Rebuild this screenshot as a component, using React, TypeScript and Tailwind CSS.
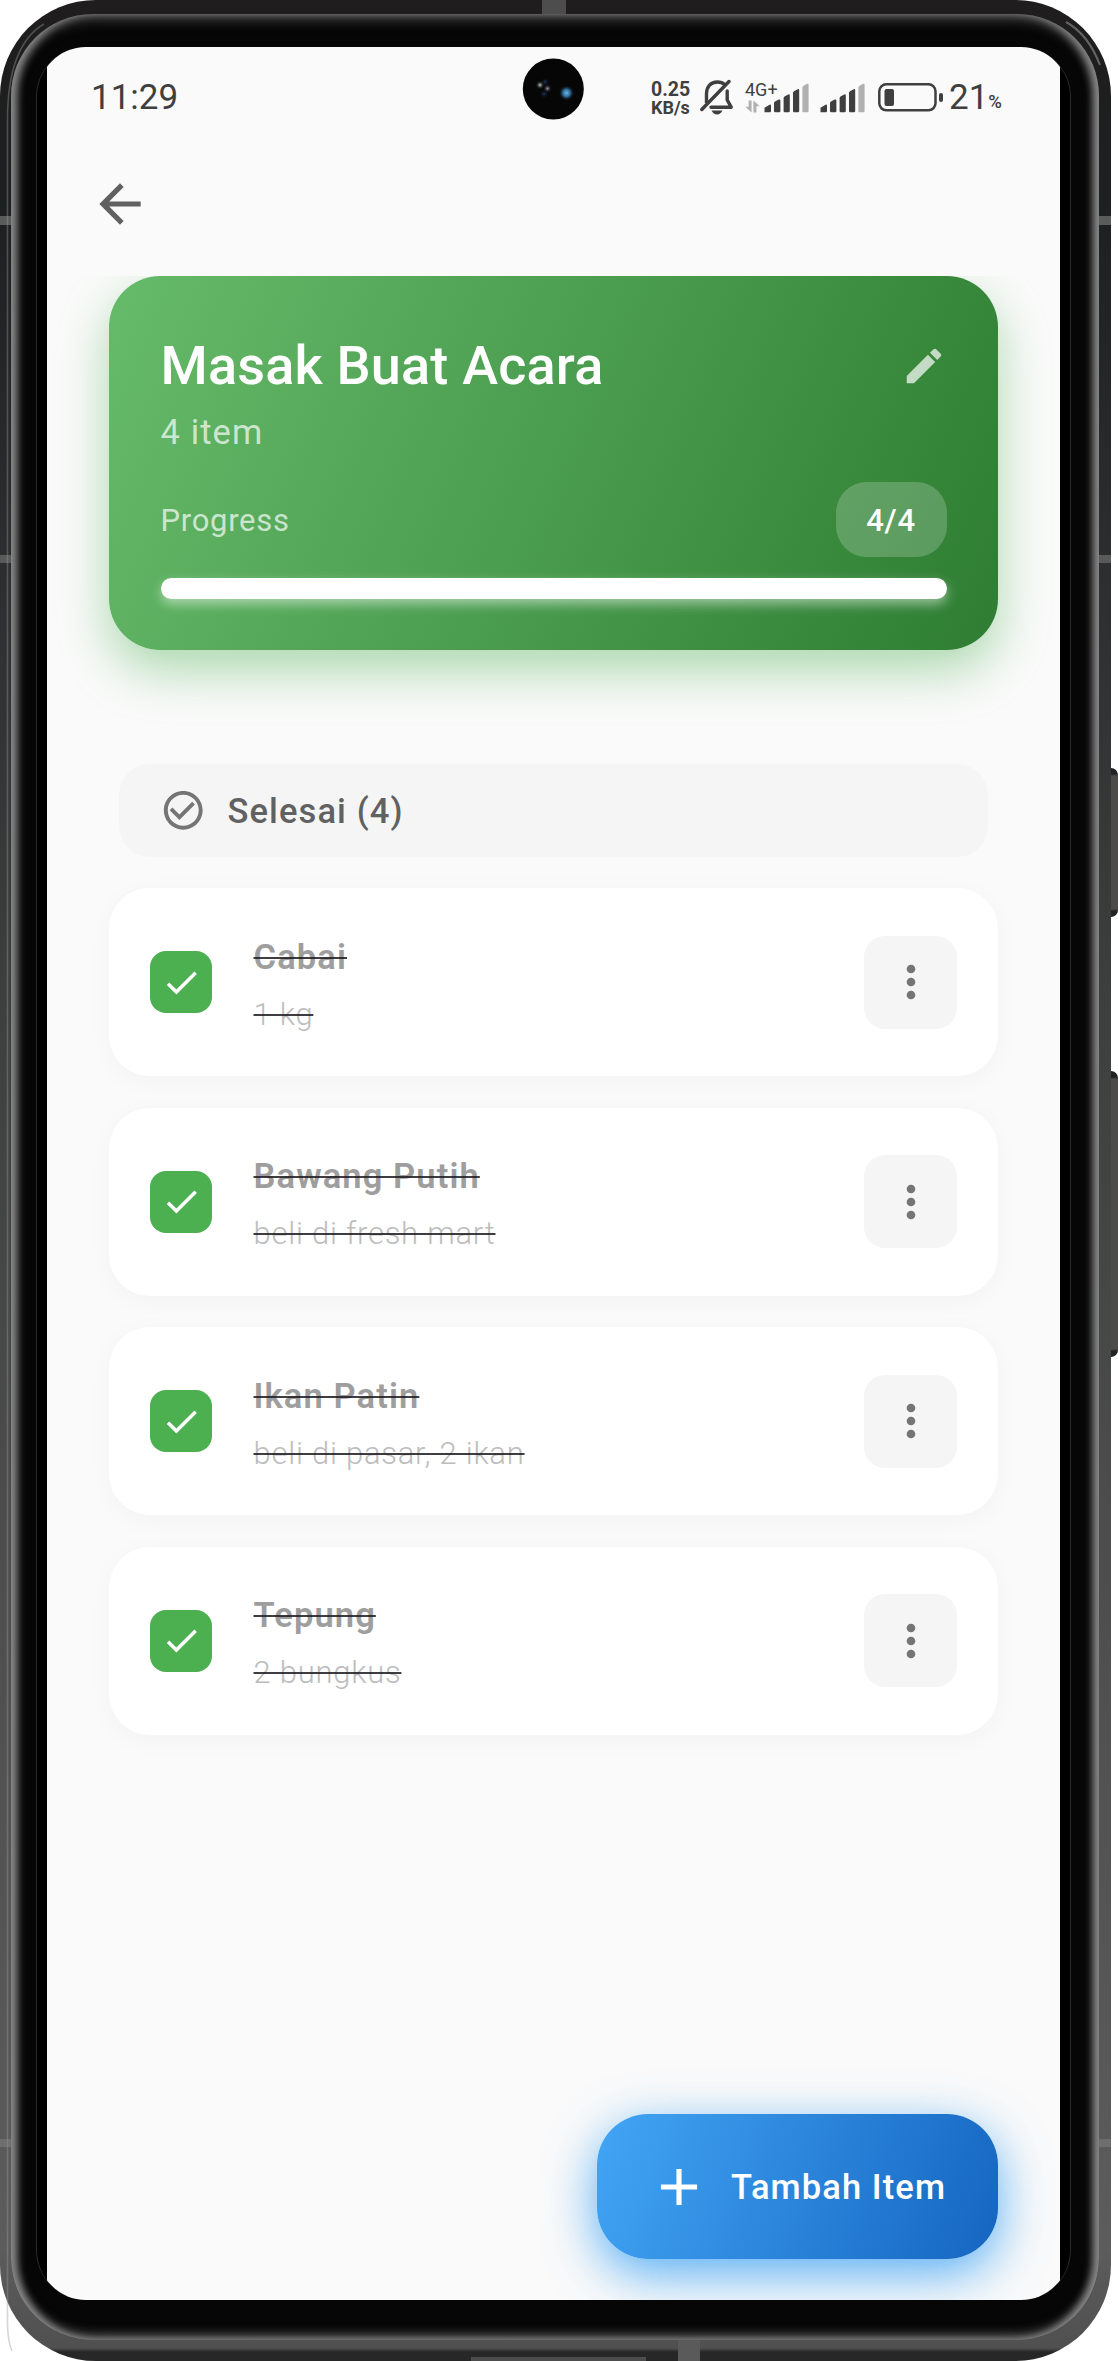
import { MdArrowBack, MdEdit, MdCheckCircleOutline, MdCheck, MdMoreVert, MdAdd } from "react-icons/md";

const items = [
  { name: "Cabai", note: "1 kg" },
  { name: "Bawang Putih", note: "beli di fresh mart" },
  { name: "Ikan Patin", note: "beli di pasar, 2 ikan" },
  { name: "Tepung", note: "2 bungkus" },
];

function SignalBars() {
  return (
    <svg className="h-[30px] w-[46px]" viewBox="0 0 46 30" fill="#3f3f3f">
      <path d="M0.5 29.2V25.5Q0.5 24.6 1.3 24.2L5.6 21.7Q7 21.2 7 22.8V28Q7 29.2 5.8 29.2Z" />
      <path d="M10 28V20Q10 19 11 18.5L14.8 16.5Q16.4 16 16.4 17.6V28Q16.4 29.2 15.2 29.2H11.2Q10 29.2 10 28Z" />
      <path d="M19.6 28V15Q19.6 14 20.5 13.5L24.2 11.4Q25.8 10.9 25.8 12.5V28Q25.8 29.2 24.6 29.2H20.8Q19.6 29.2 19.6 28Z" />
      <path d="M29 28V9.8Q29 8.8 30 8.3L33.6 6.2Q35.2 5.7 35.2 7.3V28Q35.2 29.2 34 29.2H30.2Q29 29.2 29 28Z" />
      <path fill="#b0b0b0" d="M38.4 28V4.4Q38.4 3.4 39.4 2.9L43 0.8Q44.6 0.3 44.6 1.9V28Q44.6 29.2 43.4 29.2H39.6Q38.4 29.2 38.4 28Z" />
    </svg>
  );
}

function StatusBar() {
  return (
    <div className="flex h-[101px] items-center pl-[44px] text-[#3f3f3f]">
      <span className="w-[560px] text-[35px] leading-[40px] font-[450]">11:29</span>
      <div className="w-[49px] pt-[2px] text-[19.5px] leading-[18px] font-bold">
        <div>0.25</div>
        <div className="text-[18px]">KB/s</div>
      </div>
      <svg className="h-[37px] w-[34px]" viewBox="0 0 34 37" fill="none" stroke="#3f3f3f" strokeWidth="3.4">
        <path d="M6.5 24V15C6.5 7.5 11 3 17.3 3C20.5 3 23 4 24.8 5.6" />
        <path d="M27.2 12V21L31.2 28.2H11" strokeLinejoin="round" strokeLinecap="round" />
        <path d="M1.8 30.5L29 2.5" strokeLinecap="round" />
        <path d="M11.5 31.6H22.5Q20.5 35.6 17 35.6Q13.5 35.6 11.5 31.6Z" fill="#3f3f3f" stroke="none" />
      </svg>
      <div className="-mt-[2px] ml-[11px] flex w-[19px] flex-col items-start">
        <span className="text-[18px] leading-[18px] font-[450]">4G+</span>
        <svg className="mt-[1px] h-[13px] w-[15px]" viewBox="0 0 15 13" fill="#b0b0b0">
          <path d="M3.6 0.5H6.6V12.5L0.3 6.8H3.6Z" />
          <path d="M8.4 12.5V0.5L14.7 6.2H11.4V12.5Z" />
        </svg>
      </div>
      <SignalBars />
      <div className="ml-[10px]">
        <SignalBars />
      </div>
      <svg className="ml-[12px] h-[29px] w-[66px]" viewBox="0 0 66 29" fill="none">
        <rect x="1.3" y="1.3" width="56.2" height="26" rx="7" stroke="#3f3f3f" strokeWidth="2.5" />
        <rect x="6.5" y="6" width="9.5" height="17" rx="2" fill="#3f3f3f" />
        <rect x="61" y="10" width="4" height="9" rx="2" fill="#3f3f3f" />
      </svg>
      <span className="ml-[5px] text-[35px] leading-[40px] font-[450]">21</span>
      <span className="pt-[9px] text-[18.5px] leading-[20px] font-medium">%</span>
    </div>
  );
}

function SummaryCard() {
  return (
    <section className="flex h-[374px] flex-col rounded-[51px] bg-[linear-gradient(112.8deg,#66bb6a,#2e7d32)] px-[51.5px] pt-[60px] text-white shadow-[0_20px_50px_rgba(76,175,80,0.45)]">
      <div className="flex h-[60px] items-center justify-between">
        <h1 className="text-[54px] leading-[60px] font-medium tracking-[0.2px]">Masak Buat Acara</h1>
        <MdEdit className="size-[46px] text-white/70" />
      </div>
      <p className="mt-[16px] text-[34.5px] leading-[40px] tracking-[1.1px] text-white/70">4 item</p>
      <div className="mt-[30px] flex h-[75px] items-center justify-between">
        <span className="pt-[3px] text-[31px] leading-[36px] tracking-[0.7px] text-white/70">Progress</span>
        <span className="flex h-[75px] w-[111px] items-center justify-center rounded-[31px] bg-white/20 pt-[3px] text-[31px] font-medium tracking-[0.7px]">4/4</span>
      </div>
      <div className="mt-[21px] h-[21px] rounded-full bg-white shadow-[0_5px_12px_rgba(255,255,255,0.5)]" />
    </section>
  );
}

function ItemCard({ name, note }: { name: string; note: string }) {
  return (
    <li className="flex h-[188px] items-center rounded-[41px] bg-white pr-[41px] pl-[41px] shadow-[0_5px_26px_rgba(0,0,0,0.03)]">
      <span className="flex size-[62px] items-center justify-center rounded-[16px] bg-[#4caf50]">
        <MdCheck className="size-[41px] text-white" />
      </span>
      <div className="ml-[41.5px] flex flex-1 flex-col items-start gap-[18px] pt-[7px]">
        <span className="text-[34.5px] leading-[40px] font-semibold tracking-[1.1px] text-[#9e9e9e] line-through decoration-[#1d1b20]/85 decoration-2">{name}</span>
        <span className="text-[31px] leading-[40px] font-light tracking-[0.75px] text-[#bdbdbd] line-through decoration-[#1d1b20]/85 decoration-2">{note}</span>
      </div>
      <button className="flex size-[93px] items-center justify-center rounded-[21px] bg-[#f5f5f5]">
        <MdMoreVert className="size-[52px] text-[#757575]" />
      </button>
    </li>
  );
}

export default function App() {
  return (
    <div className="relative h-[2361px] w-[1118px] overflow-hidden bg-white font-[Roboto,sans-serif]">
      <div className="absolute top-[768px] right-0 h-[149px] w-[12px] rounded-r-[7px] bg-[linear-gradient(to_bottom,#222_0,#222_6px,#4c4b4a_8px,#4c4b4a_141px,#222_143px)]" />
      <div className="absolute top-[1071px] right-0 h-[286px] w-[12px] rounded-r-[7px] bg-[linear-gradient(to_bottom,#222_0,#222_6px,#4c4b4a_8px,#4c4b4a_278px,#222_280px)]" />
      <div className="relative h-[2361px] w-[1111px] overflow-hidden rounded-[96px] bg-[linear-gradient(to_bottom,#1f1d1d_0,#1d2021_200px,#3d3f3f_1000px,#4c4c4c_1500px,#5c5c5c_2250px,#505050_2348px,#272727_2352px,#272727_2360px)] pt-[14px] pr-[12px] pl-[11px]">
        <div className="absolute top-0 left-[542px] h-[14px] w-[24px] bg-[#4d4d4d]" />
        <div className="absolute bottom-0 left-[678px] h-[22px] w-[22px] bg-[#5a5a5a]" />
        <div className="absolute bottom-0 left-[471px] h-[4px] w-[175px] bg-[#4d4d4d]" />
        <div className="absolute top-[216px] left-0 h-[9px] w-full bg-[#5a5c5c]" />
        <div className="absolute top-[555px] left-0 h-[8px] w-full bg-[#5a5a5a]" />
        <div className="absolute top-[2139px] left-0 h-[8px] w-full bg-[#6e6e6e]" />
        <div className="relative h-[2326px] rounded-[82px] bg-[#060606] pt-[33px] pr-[28px] pl-[25px] shadow-[inset_9px_0_8px_-3px_#8a8a8a,inset_-9px_0_8px_-3px_#8a8a8a,inset_0_7px_14px_-3px_#555,inset_0_-7px_12px_-3px_#777]">
          <div className="h-[2253px] overflow-hidden rounded-[50px] border-x border-[#2b2b2b] bg-black px-[10px]">
            <main className="relative h-full overflow-hidden bg-[#fafafa]">
              <StatusBar />
              <div className="h-[128px] pt-[25px] pl-[41.5px]">
                <MdArrowBack className="size-[62px] text-[#616161]" />
              </div>
              <div className="h-[2024px] overflow-hidden px-[62px]">
                <SummaryCard />
                <div className="mx-[10px] mt-[114px] flex h-[93px] items-center rounded-[31px] bg-[#f5f5f5] pl-[41px]">
                  <MdCheckCircleOutline className="size-[46.5px] text-[#757575]" />
                  <h2 className="pt-[3px] pl-[21px] text-[34.5px] font-medium tracking-[1.1px] text-[#616161]">Selesai (4)</h2>
                </div>
                <ul className="mt-[31px] flex flex-col gap-[31.5px]">
                  {items.map((item) => (
                    <ItemCard key={item.name} name={item.name} note={item.note} />
                  ))}
                </ul>
              </div>
              <button className="absolute right-[62px] bottom-[41px] flex h-[145px] w-[401px] items-center rounded-[51px] bg-[linear-gradient(109.9deg,#42a5f5,#1565c0)] pl-[51px] text-white shadow-[0_15px_50px_rgba(33,150,243,0.75)]">
                <MdAdd className="size-[62px]" />
                <span className="pt-[3px] pl-[21px] text-[34.5px] font-medium tracking-[1.1px]">Tambah Item</span>
              </button>
            </main>
          </div>
        </div>
      </div>
      <svg className="absolute top-0 left-0 h-[2361px] w-[1118px]" viewBox="0 0 1118 2361" fill="none">
        <path d="M44 24C20 38 7.5 70 7.5 120V2325Q8 2342 12 2351" stroke="#999" strokeOpacity="0.4" strokeWidth="1.6" />
        <path d="M1066 22Q1088 34 1100 65" stroke="#aaa" strokeOpacity="0.5" strokeWidth="2" />
      </svg>
      <svg className="absolute top-[58px] left-[522px] size-[62px]" viewBox="0 0 62 62">
        <defs>
          <radialGradient id="lens"><stop offset="0" stopColor="#6fb3da" /><stop offset="0.45" stopColor="#2f6ea0" /><stop offset="1" stopColor="#070707" stopOpacity="0" /></radialGradient>
          <radialGradient id="glint"><stop offset="0" stopColor="#c5d2cf" /><stop offset="1" stopColor="#070707" stopOpacity="0" /></radialGradient>
          <radialGradient id="violet"><stop offset="0" stopColor="#a493b5" /><stop offset="1" stopColor="#070707" stopOpacity="0" /></radialGradient>
          <radialGradient id="navy"><stop offset="0" stopColor="#1a3566" /><stop offset="1" stopColor="#070707" stopOpacity="0" /></radialGradient>
        </defs>
        <circle cx="31.3" cy="31" r="30.5" fill="#060606" />
        <circle cx="23" cy="24" r="4.5" fill="url(#navy)" />
        <circle cx="22" cy="36" r="4.5" fill="url(#navy)" />
        <circle cx="18" cy="27" r="4.5" fill="url(#glint)" />
        <circle cx="25.5" cy="30.5" r="4.5" fill="url(#violet)" />
        <circle cx="44.5" cy="35" r="8" fill="url(#lens)" />
      </svg>
    </div>
  );
}
